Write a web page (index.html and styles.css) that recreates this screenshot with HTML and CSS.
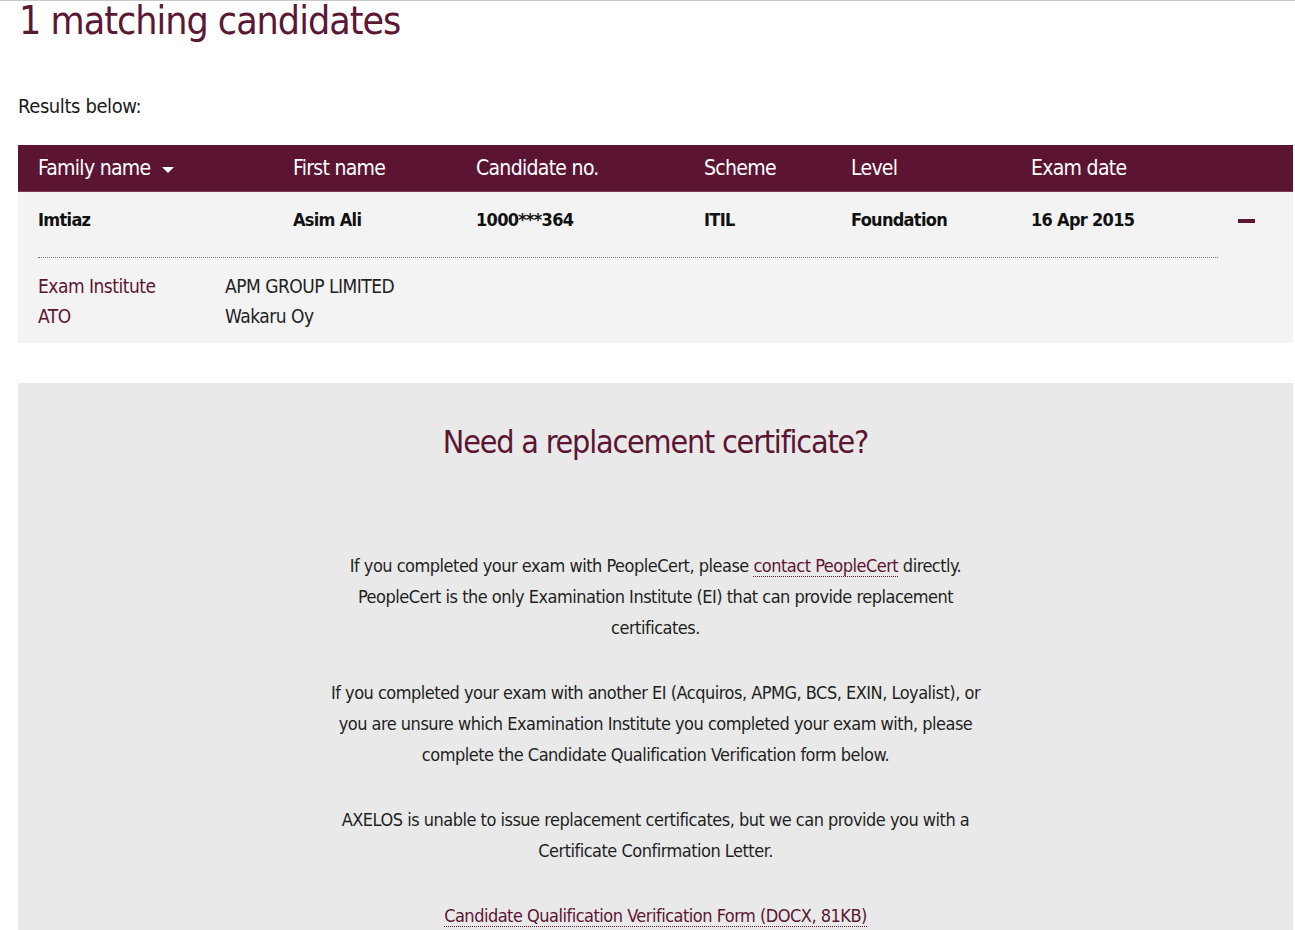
FILE: index.html
```html
<!DOCTYPE html>
<html lang="en">
<head>
<meta charset="utf-8">
<title>Candidate results</title>
<link rel="stylesheet" href="styles.css">
</head>
<body>
<div class="page">
  <h1 class="title">1 matching candidates</h1>
  <p class="results">Results below:</p>

  <div class="table">
    <div class="thead">
      <div class="c c1">Family name <span class="caret"></span></div>
      <div class="c c2">First name</div>
      <div class="c c3">Candidate no.</div>
      <div class="c c4">Scheme</div>
      <div class="c c5">Level</div>
      <div class="c c6">Exam date</div>
      <div class="c c7"></div>
    </div>
    <div class="row">
      <div class="rmain">
        <div class="c c1">Imtiaz</div>
        <div class="c c2">Asim Ali</div>
        <div class="c c3">1000***364</div>
        <div class="c c4">ITIL</div>
        <div class="c c5">Foundation</div>
        <div class="c c6">16 Apr 2015</div>
        <div class="c c7"><span class="minus"></span></div>
      </div>
      <div class="details">
        <div class="dl">Exam Institute</div><div class="dv">APM GROUP LIMITED</div>
        <div class="dl">ATO</div><div class="dv">Wakaru Oy</div>
      </div>
    </div>
  </div>

  <section class="replace">
    <h2>Need a replacement certificate?</h2>
    <div class="txt">
      <p>If you completed your exam with PeopleCert, please <a href="#">contact PeopleCert</a> directly.<br>PeopleCert is the only Examination Institute (EI) that can provide replacement<br>certificates.</p>
      <p>If you completed your exam with another EI (Acquiros, APMG, BCS, EXIN, Loyalist), or<br>you are unsure which Examination Institute you completed your exam with, please<br>complete the Candidate Qualification Verification form below.</p>
      <p>AXELOS is unable to issue replacement certificates, but we can provide you with a<br>Certificate Confirmation Letter.</p>
      <p><a href="#">Candidate Qualification Verification Form (DOCX, 81KB)</a></p>
    </div>
  </section>
</div>
</body>
</html>
```
FILE: styles.css
```css
html, body {
  margin: 0;
  padding: 0;
  background: #fff;
}
body {
  font-family: "DejaVu Sans Condensed", "Liberation Sans", sans-serif;
  color: #1a1a1a;
  border-top: 1px solid #c8c8c8;
}
.page {
  padding: 0 2px 0 18px;
}
.title {
  margin: 0;
  font-weight: normal;
  font-size: 39px;
  line-height: 40px;
  letter-spacing: -1px;
  color: #5b1734;
  padding-left: 1px;
}
.results {
  margin: 52px 0 0;
  font-size: 20px;
  line-height: 26px;
  letter-spacing: -0.4px;
  color: #1a1a1a;
}
.table {
  margin-top: 26px;
}
.thead, .rmain {
  display: flex;
  align-items: center;
}
.thead {
  background: #5b1533;
  color: #fff;
  height: 47px;
  font-size: 21px;
  letter-spacing: -0.7px;
  border-bottom: 1px solid #7a3a55;
  box-sizing: border-box;
}
.c { flex: none; }
.c1 { width: 255px; padding-left: 20px; }
.c2 { width: 183px; }
.c3 { width: 228px; }
.c4 { width: 147px; }
.c5 { width: 180px; }
.c6 { width: 205px; }
.c7 { flex: 1; }
.caret {
  display: inline-block;
  width: 0; height: 0;
  border-left: 6px solid transparent;
  border-right: 6px solid transparent;
  border-top: 6px solid #fff;
  vertical-align: middle;
  margin-left: 6px;
  position: relative;
  top: 1px;
}
.row {
  background: #f3f3f3;
  padding-bottom: 14px;
}
.rmain {
  height: 55px;
  font-size: 18px;
  font-weight: bold;
  letter-spacing: -0.7px;
  color: #111;
  margin-bottom: 10px;
}
.rmain .c7 {
  display: flex;
}
.minus {
  display: block;
  width: 17px;
  height: 4px;
  background: #5b1533;
  margin-left: 2px;
  margin-top: 2px;
}
.details {
  margin: 0 75px 0 20px;
  border-top: 1px dotted #777;
  padding-top: 15px;
  display: grid;
  grid-template-columns: 187px 1fr;
  row-gap: 4px;
  font-size: 19px;
  line-height: 26px;
  letter-spacing: -0.5px;
}
.dl { color: #5b1533; }
.dv { color: #222; }
.replace {
  margin-top: 40px;
  background: #e9e9e9;
  padding: 38px 0 40px;
  text-align: center;
}
.replace h2 {
  margin: 0;
  font-weight: normal;
  font-size: 32px;
  line-height: 42px;
  letter-spacing: -1.2px;
  color: #5b1533;
}
.txt {
  width: 760px;
  margin: 87px auto 0;
  font-size: 18px;
  line-height: 31px;
  letter-spacing: -0.5px;
  color: #1f1f1f;
}
.txt p { margin: 0 0 34px; }
.txt a {
  color: #5b1533;
  text-decoration: none;
  border-bottom: 1px dotted #5b1533;
}
```
